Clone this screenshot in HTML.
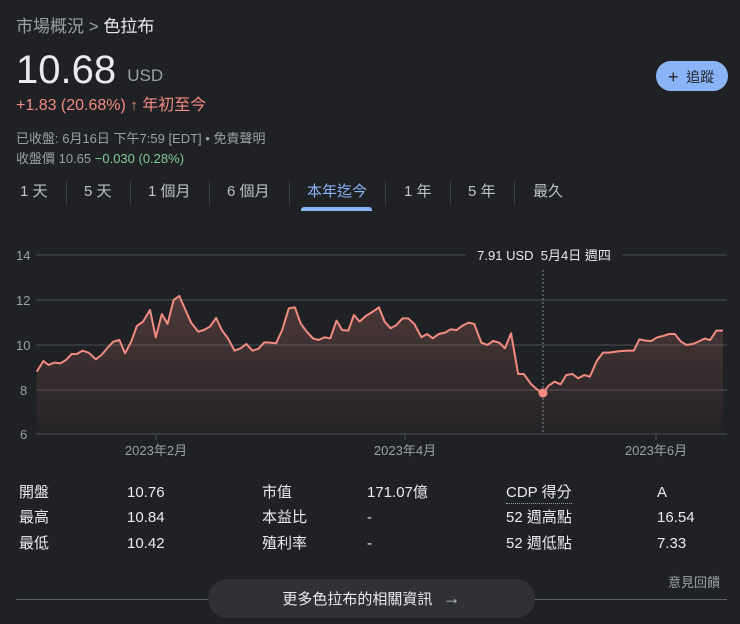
<!DOCTYPE html>
<html><head><meta charset="utf-8"><style>
*{margin:0;padding:0;box-sizing:border-box}
body{width:740px;height:624px;background:#202124;font-family:"Liberation Sans","Noto Sans CJK TC",sans-serif;color:#e8eaed;position:relative;overflow:hidden}
.a{position:absolute;white-space:nowrap}
.g{color:#9aa0a6}
.tab{position:absolute;top:182px;font-size:15px;color:#bdc1c6;line-height:20px;height:20px}
.sep{position:absolute;top:181px;width:1px;height:24px;background:#3c4043}
.st{position:absolute;font-size:15px;color:#e8eaed;line-height:20px;height:20px}
</style></head><body>
<div class="a g" style="left:16px;top:12px;font-size:17px">市場概況 &gt; <span style="color:#e8eaed">色拉布</span></div>
<div class="a" style="left:16px;top:48px;font-size:40px;color:#e8eaed">10.68 <span class="g" style="font-size:17px;position:relative;top:-2px">USD</span></div>
<div class="a" style="left:16px;top:96px;font-size:16px;color:#f28b82;line-height:20px">+1.83 (20.68%) <b style="font-size:15px">↑</b> 年初至今</div>
<div class="a g" style="left:16px;top:128px;font-size:13px">已收盤: 6月16日 下午7:59 [EDT] • 免責聲明</div>
<div class="a g" style="left:16px;top:148px;font-size:13px">收盤價 10.65 <span style="color:#81c995">−0.030 (0.28%)</span></div>
<div class="a" style="left:656px;top:61px;width:72px;height:30px;border-radius:15px;background:#8ab4f8;color:#202124;font-size:14px;line-height:30px;padding-left:12px"><span style="font-size:18px;position:relative;top:1px">+</span>&nbsp; 追蹤</div>

<div class="tab" style="left:20px">1 天</div>
<div class="sep" style="left:66px"></div>
<div class="tab" style="left:84px">5 天</div>
<div class="sep" style="left:130px"></div>
<div class="tab" style="left:148px">1 個月</div>
<div class="sep" style="left:209px"></div>
<div class="tab" style="left:227px">6 個月</div>
<div class="sep" style="left:289px"></div>
<div class="tab" style="left:307px;color:#8ab4f8">本年迄今</div>
<div class="a" style="left:301px;top:207px;width:71px;height:4px;border-radius:3px 3px 0 0;background:#8ab4f8"></div>
<div class="sep" style="left:385px"></div>
<div class="tab" style="left:404px">1 年</div>
<div class="sep" style="left:450px"></div>
<div class="tab" style="left:468px">5 年</div>
<div class="sep" style="left:514px"></div>
<div class="tab" style="left:533px">最久</div>

<svg class="a" style="left:0;top:0" width="740" height="470">
<defs><linearGradient id="f" x1="0" y1="0" x2="0" y2="1"><stop offset="0" stop-color="#f28b82" stop-opacity="0.22"/><stop offset="1" stop-color="#f28b82" stop-opacity="0.02"/></linearGradient></defs>
<g stroke="#3c4043" stroke-width="1.5">
<line x1="36" y1="255" x2="727" y2="255"/><line x1="36" y1="300" x2="727" y2="300"/><line x1="36" y1="345" x2="727" y2="345"/><line x1="36" y1="390" x2="727" y2="390"/><line x1="36" y1="434" x2="727" y2="434"/>
<line x1="156" y1="434" x2="156" y2="440"/><line x1="405" y1="434" x2="405" y2="440"/><line x1="656" y1="434" x2="656" y2="440"/>
</g>
<g fill="#9aa0a6" font-size="13" font-family="Liberation Sans,sans-serif">
<text x="16" y="260">14</text><text x="16" y="305">12</text><text x="16" y="350">10</text><text x="20" y="395">8</text><text x="20" y="439">6</text>
</g>
<g fill="#9aa0a6" font-size="13" font-family="Liberation Sans,Noto Sans CJK TC,sans-serif" text-anchor="middle">
<text x="156" y="455">2023年2月</text><text x="405" y="455">2023年4月</text><text x="656" y="455">2023年6月</text>
</g>
<line x1="543" y1="270" x2="543" y2="434" stroke="#80868b" stroke-dasharray="2,2"/>
<g transform="translate(0,230) scale(0.4719,0.3333)">
<polygon fill="url(#f)" points="78,612 78,425 92,393 103,405 115,398 128,400 140,390 152,372 163,372 175,362 188,368 203,388 215,375 230,350 240,335 253,330 265,370 278,335 290,288 303,275 318,240 330,322 343,252 355,282 368,210 380,198 393,240 405,278 420,305 432,300 445,290 458,264 470,300 483,325 497,362 510,355 522,342 535,362 548,356 560,337 573,338 585,340 598,300 612,235 625,232 637,280 650,305 663,325 675,330 688,322 700,325 713,272 725,300 738,302 750,255 762,275 775,258 790,245 803,232 815,275 828,295 840,285 853,265 865,265 878,282 893,322 905,312 917,325 930,312 943,308 955,298 968,300 980,287 993,278 1005,282 1020,338 1033,345 1045,333 1058,338 1070,355 1083,310 1098,432 1110,432 1125,462 1138,478 1150,490 1162,468 1175,455 1188,463 1200,435 1213,432 1225,445 1238,435 1250,440 1265,392 1278,368 1290,368 1305,365 1318,363 1330,362 1343,362 1355,328 1368,332 1380,333 1393,322 1405,318 1418,312 1430,312 1443,335 1455,345 1468,342 1480,335 1493,326 1505,330 1518,302 1532,302 1532,612"/>
<polyline fill="none" stroke="#f28b82" stroke-width="2" vector-effect="non-scaling-stroke" stroke-linejoin="round" points="78,425 92,393 103,405 115,398 128,400 140,390 152,372 163,372 175,362 188,368 203,388 215,375 230,350 240,335 253,330 265,370 278,335 290,288 303,275 318,240 330,322 343,252 355,282 368,210 380,198 393,240 405,278 420,305 432,300 445,290 458,264 470,300 483,325 497,362 510,355 522,342 535,362 548,356 560,337 573,338 585,340 598,300 612,235 625,232 637,280 650,305 663,325 675,330 688,322 700,325 713,272 725,300 738,302 750,255 762,275 775,258 790,245 803,232 815,275 828,295 840,285 853,265 865,265 878,282 893,322 905,312 917,325 930,312 943,308 955,298 968,300 980,287 993,278 1005,282 1020,338 1033,345 1045,333 1058,338 1070,355 1083,310 1098,432 1110,432 1125,462 1138,478 1150,490 1162,468 1175,455 1188,463 1200,435 1213,432 1225,445 1238,435 1250,440 1265,392 1278,368 1290,368 1305,365 1318,363 1330,362 1343,362 1355,328 1368,332 1380,333 1393,322 1405,318 1418,312 1430,312 1443,335 1455,345 1468,342 1480,335 1493,326 1505,330 1518,302 1532,302"/>
</g>
<circle cx="543" cy="393" r="4.5" fill="#f28b82"/>
<rect x="466" y="244" width="156" height="22" fill="#202124"/>
<text x="544" y="260" fill="#e8eaed" font-size="13" text-anchor="middle" font-family="Liberation Sans,Noto Sans CJK TC,sans-serif">7.91 USD&#160;&#160;5月4日 週四</text>
</svg>

<div class="st" style="left:19px;top:483px">開盤</div><div class="st" style="left:127px;top:483px">10.76</div>
<div class="st" style="left:262px;top:483px">市值</div><div class="st" style="left:367px;top:483px">171.07億</div>
<div class="st" style="left:506px;top:483px;border-bottom:1px dotted #9aa0a6;height:21px">CDP 得分</div><div class="st" style="left:657px;top:483px">A</div>
<div class="st" style="left:19px;top:508px">最高</div><div class="st" style="left:127px;top:508px">10.84</div>
<div class="st" style="left:262px;top:508px">本益比</div><div class="st" style="left:367px;top:508px">-</div>
<div class="st" style="left:506px;top:508px">52 週高點</div><div class="st" style="left:657px;top:508px">16.54</div>
<div class="st" style="left:19px;top:534px">最低</div><div class="st" style="left:127px;top:534px">10.42</div>
<div class="st" style="left:262px;top:534px">殖利率</div><div class="st" style="left:367px;top:534px">-</div>
<div class="st" style="left:506px;top:534px">52 週低點</div><div class="st" style="left:657px;top:534px">7.33</div>

<div class="a g" style="left:668px;top:572px;font-size:13px">意見回饋</div>
<div class="a" style="left:16px;top:599px;width:711px;height:1px;background:#5f6368"></div>
<div class="a" style="left:208px;top:579px;width:327px;height:39px;border-radius:20px;background:#303134;color:#e8eaed;font-size:15px;line-height:39px;text-align:center">更多色拉布的相關資訊 <span style="color:#bdc1c6;font-size:18px;margin-left:6px">→</span></div>
</body></html>
